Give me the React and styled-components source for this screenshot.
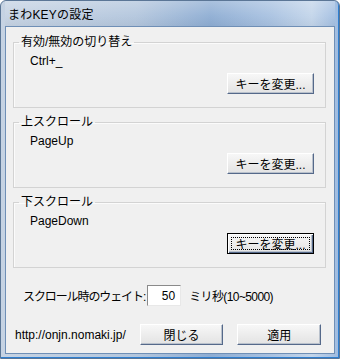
import React from "react";
import styled, {createGlobalStyle} from "styled-components";

const GlobalStyle = createGlobalStyle`
  html, body {
    margin: 0;
    padding: 0;
    background: #ffffff;
  }
  body {
    font-family: "Liberation Sans", "Noto Sans CJK JP", sans-serif;
    font-size: 12px;
    color: #000;
  }
`;

const Window = styled.div`
  width: 340px;
  height: 359px;
  box-sizing: border-box;
  display: flex;
  flex-direction: column;
  padding: 0 4px 4px 4px;
  border: 1px solid #5b7696;
  border-radius: 6px 6px 0 0;
  background: linear-gradient(90deg, #c6d3e3 0%, #b3c6dd 40%, #8eadd3 62%, #a9c2e1 80%, #c3d5ea 92%, #9ebbe0 100%);
  box-shadow: inset -1px -1px 0 #2f7fd0;
`;

const TitleBar = styled.div`
  height: 25px;
  display: flex;
  align-items: center;
  padding-left: 3px;
  font-size: 12px;
  letter-spacing: 0.2px;
  background: linear-gradient(180deg, rgba(255,255,255,0.25) 0%, rgba(255,255,255,0.05) 60%, rgba(0,0,0,0.03) 100%);
`;

const Client = styled.div`
  flex: 1;
  display: flex;
  flex-direction: column;
  background: #f0f0f0;
  border: 1px solid #6f8fb6;
  padding: 9px 8px 0 7px;
`;

const Group = styled.fieldset`
  margin: 0 0 8px 0;
  padding: 0;
  min-width: 0;
  border: 1px solid #d3d3d3;
  box-shadow: inset 1px 1px 0 #fbfbfb;
`;

const Legend = styled.legend`
  margin-left: 5px;
  padding: 0 2px;
  line-height: 13px;
  font-size: 12px;
`;

const GroupBody = styled.div`
  display: flex;
  flex-direction: column;
  padding: 6px 11px 13px 16px;
`;

const Value = styled.div`
  line-height: 13px;
  font-size: 12px;
`;

const Button = styled.button`
  width: 87px;
  height: 21px;
  box-sizing: border-box;
  font-family: inherit;
  font-size: 12px;
  color: #000;
  padding: 0;
  border-style: solid;
  border-width: 1px;
  border-color: #ffffff #55698a #55698a #ffffff;
  background: linear-gradient(180deg, #f7f7f7 0%, #ededed 50%, #e3e3e3 100%);
  box-shadow: inset -1px -1px 0 #b9c1cc;
  outline: ${p => (p.$focused ? "1px dotted #000" : "none")};
  outline-offset: -5px;
  ${p => p.$focused && `
    border-color: #000;
    box-shadow: inset 1px 1px 0 #fff, inset -1px -1px 0 #55698a, inset -2px -2px 0 #b9c1cc;
  `}
`;

const ButtonRow = styled.div`
  display: flex;
  justify-content: flex-end;
  margin-top: 5px;
`;

const WaitRow = styled.div`
  display: flex;
  align-items: center;
  margin-top: 9px;
  padding-left: 10px;
`;

const Label = styled.span`
  letter-spacing: ${p => p.$tight}px;
  white-space: nowrap;
`;

const NumberBox = styled.div`
  width: 34px;
  height: 21px;
  box-sizing: border-box;
  margin: 0 8px 0 2px;
  background: #fff;
  border-style: solid;
  border-width: 1px;
  border-color: #8a8a8a #e8e8e8 #e8e8e8 #8a8a8a;
  display: flex;
  align-items: center;
  justify-content: flex-end;
  padding-right: 5px;
`;

const FooterRow = styled.div`
  display: flex;
  align-items: center;
  margin-top: 18px;
  padding: 0 5px 0 2px;
  gap: 14px;
`;

const Url = styled.div`
  flex: 1;
`;

const KeyGroup = ({title, value, focused}) => (
  <Group>
    <Legend>{title}</Legend>
    <GroupBody>
      <Value>{value}</Value>
      <ButtonRow>
        <Button $focused={focused}>キーを変更...</Button>
      </ButtonRow>
    </GroupBody>
  </Group>
);

const App = () => {
  return (
    <>
      <GlobalStyle/>
      <Window>
        <TitleBar>まわKEYの設定</TitleBar>
        <Client>
          <KeyGroup title="有効/無効の切り替え" value="Ctrl+_"/>
          <KeyGroup title="上スクロール" value="PageUp"/>
          <KeyGroup title="下スクロール" value="PageDown" focused/>
          <WaitRow>
            <Label $tight={-1.1}>スクロール時のウェイト:</Label>
            <NumberBox>50</NumberBox>
            <Label $tight={-0.6}>ミリ秒(10~5000)</Label>
          </WaitRow>
          <FooterRow>
            <Url>http://onjn.nomaki.jp/</Url>
            <Button>閉じる</Button>
            <Button>適用</Button>
          </FooterRow>
        </Client>
      </Window>
    </>
  );
};

export default App;
